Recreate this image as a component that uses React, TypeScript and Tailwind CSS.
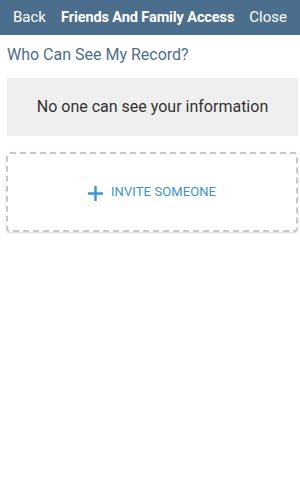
import React from "react";

export default function App() {
  return (
    <div className="w-[300px] h-[500px] bg-white" style={{ fontFamily: '"Helvetica Neue", Roboto, "Liberation Sans", sans-serif' }}>
      <div className="h-[35px] bg-[#4c6e8d] flex items-center justify-between px-[13px] text-white text-[15px]">
        <span>Back</span>
        <span className="font-bold text-[14.5px] tracking-[-0.1px]">Friends And Family Access</span>
        <span>Close</span>
      </div>
      <div className="px-[7px] pt-[8px] pb-[11px] text-[16px] text-[#4c6e8d]">Who Can See My Record?</div>
      <div className="ml-[7px] mr-[2px] h-[58px] bg-[#efefef] flex items-center justify-center text-[16px] text-[#333333]">
        No one can see your information
      </div>
      <div className="mt-[16px] ml-[6px] mr-[2px] h-[80px] rounded-[4px] border-2 border-dashed border-[#c8c8c8] shadow-[0_1px_2px_rgba(0,0,0,0.15)] flex items-center justify-center gap-[8px] text-[#3a94cf]">
        <svg width="15" height="15" viewBox="0 0 15 15" className="mt-[2px]">
          <path d="M7.5 0v15M0 7.5h15" stroke="#3a94cf" strokeWidth="2.4" />
        </svg>
        <span className="text-[13px] tracking-[0.1px]">INVITE SOMEONE</span>
      </div>
    </div>
  );
}
